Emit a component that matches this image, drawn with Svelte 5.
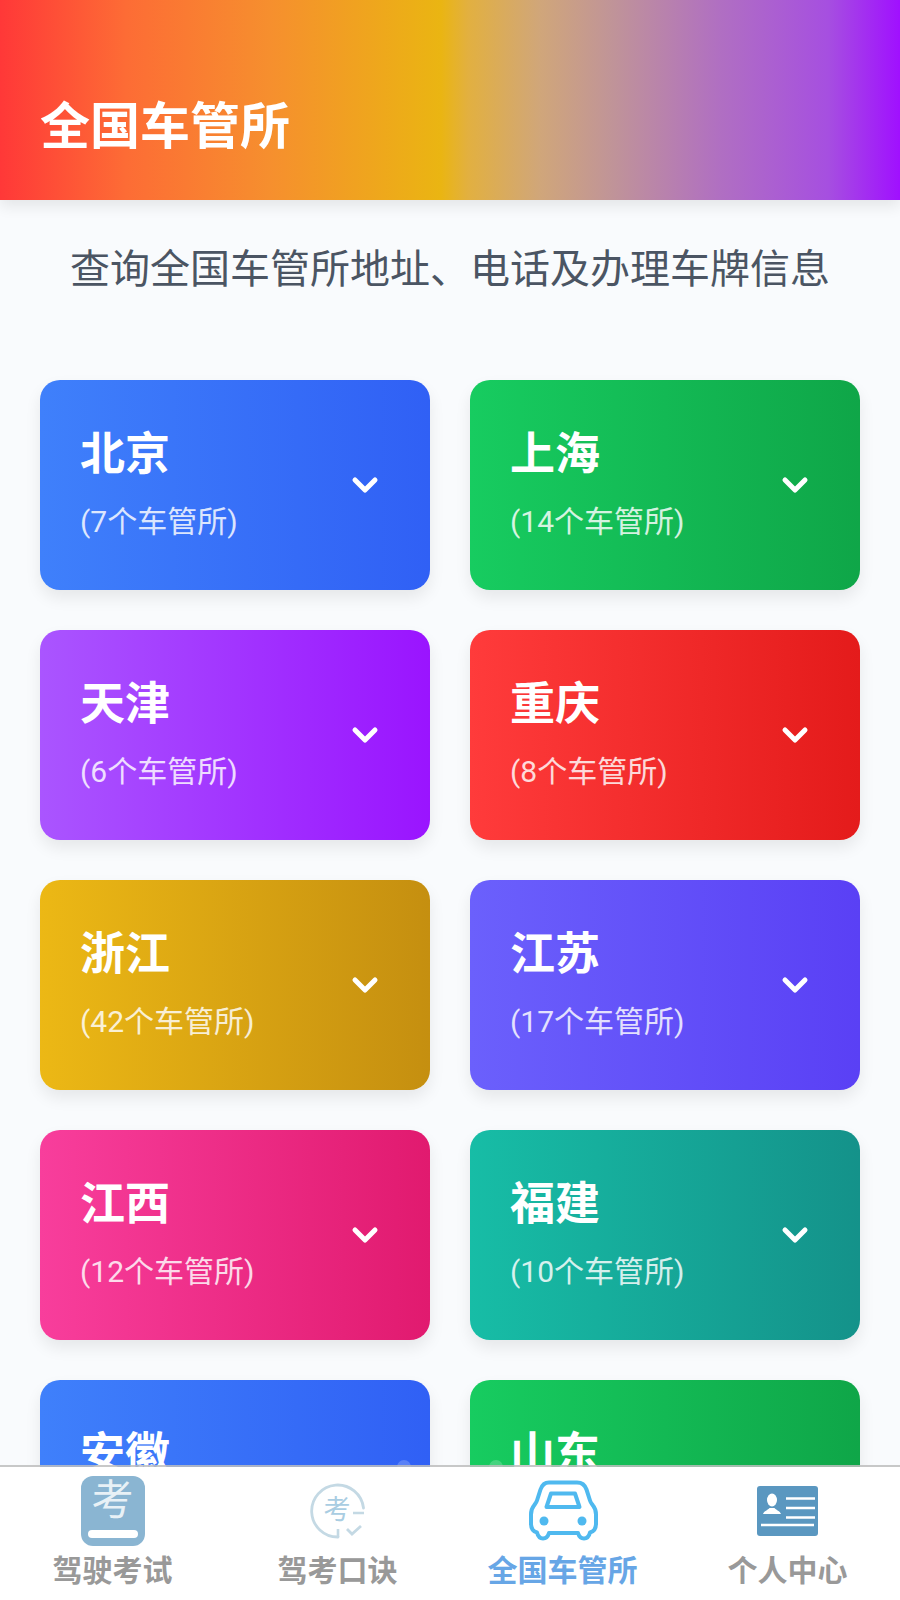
<script>
  const cards = [
    { name: '北京', count: 7, tone: 'blue' },
    { name: '上海', count: 14, tone: 'green' },
    { name: '天津', count: 6, tone: 'purple' },
    { name: '重庆', count: 8, tone: 'red' },
    { name: '浙江', count: 42, tone: 'yellow' },
    { name: '江苏', count: 17, tone: 'indigo' },
    { name: '江西', count: 12, tone: 'pink' },
    { name: '福建', count: 10, tone: 'teal' },
    { name: '安徽', count: 9, tone: 'blue' },
    { name: '山东', count: 16, tone: 'green' }
  ];
</script>

<div class="page">
  <header class="hero"><h1>全国车管所</h1></header>
  <main class="content">
    <p class="intro">查询全国车管所地址、电话及办理车牌信息</p>
    <div class="grid">
      {#each cards as c}
        <button class="card {c.tone}">
          <span class="info">
            <span class="name">{c.name}</span>
            <span class="count">({c.count}个车管所)</span>
          </span>
          <svg class="chev" viewBox="0 0 28 20" width="28" height="20" aria-hidden="true">
            <path d="M4 5l10 10L24 5" fill="none" stroke="#fff" stroke-width="5" stroke-linecap="round" stroke-linejoin="round" />
          </svg>
        </button>
      {/each}
    </div>
  </main>

  <span class="dot dot-a"></span>
  <span class="dot dot-b"></span>

  <nav class="tabs">
    <div class="tab">
      <div class="icon">
        <div class="exam">
          <span class="exam-char">考</span>
          <span class="exam-bar"></span>
        </div>
      </div>
      <span class="label">驾驶考试</span>
    </div>
    <div class="tab">
      <div class="icon">
        <div class="rhyme">
          <svg viewBox="0 0 56 56" width="56" height="56" aria-hidden="true">
            <path d="M53.500 25A26 26 0 1 0 28 54" fill="none" stroke="#c4d9e4" stroke-width="2.800" stroke-linecap="round" />
            <path d="M43 30h11M28 46v8" fill="none" stroke="#c4d9e4" stroke-width="2.600" />
            <path d="M37 46l5 5 9-8" fill="none" stroke="#c4d9e4" stroke-width="2.800" />
          </svg>
          <span class="rhyme-char">考</span>
        </div>
      </div>
      <span class="label">驾考口诀</span>
    </div>
    <div class="tab active">
      <div class="icon">
        <svg viewBox="0 0 70 62" width="70" height="62" aria-hidden="true">
          <path d="M21 2.500h28c5 0 8 2.500 9.500 7l3.500 11c.6 2 1.500 3 3 5 2.500 3 3 5 3 9v9c0 5-2 8-6 9-1 4-3 6-6 6s-5-2-6-5.500H21c-1 3.500-3 5.500-6 5.500s-5-2-6-6c-4-1-6-4-6-9v-9c0-4 .5-6 3-9 1.500-2 2.400-3 3-5l3.500-11c1.500-4.500 4.500-7 8.500-7z" fill="none" stroke="#4fb9ef" stroke-width="4" stroke-linejoin="round" />
          <path d="M23 13.500h24l4.500 13.500h-33z" fill="none" stroke="#4fb9ef" stroke-width="4" stroke-linejoin="round" />
          <circle cx="16" cy="41" r="4.500" fill="#4fb9ef" />
          <circle cx="54" cy="41" r="4.500" fill="#4fb9ef" />
        </svg>
      </div>
      <span class="label">全国车管所</span>
    </div>
    <div class="tab">
      <div class="icon">
        <svg viewBox="0 0 62 50" width="62" height="50" aria-hidden="true">
          <rect width="61" height="50" rx="3" fill="#5a97c0" />
          <ellipse cx="15" cy="14" rx="5" ry="6.500" fill="#fff" />
          <path d="M6 28c1-3 5-4 6.500-6h5c1.500 2 5.500 3 6.500 6z" fill="#fff" />
          <path d="M29 12.500h29M29 22h29M29 31.500h29M4 39h53" stroke="#fff" stroke-width="2.500" />
        </svg>
      </div>
      <span class="label">个人中心</span>
    </div>
  </nav>
</div>

<style>
  :global(body) {
    margin: 0;
    background: #f9fbfd;
    font-family: Roboto, "Noto Sans CJK SC", sans-serif;
  }

  .page {
    position: relative;
    height: 1600px;
    overflow: hidden;
    background: #f9fbfd;
  }

  .hero {
    display: flex;
    align-items: center;
    box-sizing: border-box;
    height: 200px;
    padding: 0 40px;
    background: linear-gradient(90deg, #ff3838 0%, #fd6c35 14%, #f68f2e 30%, #eab512 49%, #e2b040 52%, #d0a67a 60%, #c09498 68%, #b06fc2 80%, #a64fe0 92%, #a010ff 100%);
    box-shadow: 0 6px 14px rgba(0, 0, 0, 0.09);
  }

  .hero h1 {
    margin: 54px 0 0;
    color: #fff;
    font-size: 50px;
    line-height: 1;
    font-weight: 700;
  }

  .content {
    padding: 42px 40px 0;
  }

  .intro {
    margin: 0 0 82px;
    text-align: center;
    color: #4b5563;
    font-size: 40px;
    line-height: 56px;
  }

  .grid {
    display: grid;
    grid-template-columns: 390px 390px;
    gap: 40px;
  }

  .card {
    display: flex;
    align-items: center;
    justify-content: space-between;
    box-sizing: border-box;
    height: 210px;
    padding: 0 51px 0 40px;
    border: 0;
    border-radius: 20px;
    font: inherit;
    color: #fff;
    text-align: left;
    box-shadow: 0 8px 16px rgba(0, 0, 0, 0.08);
  }

  .blue { background: linear-gradient(90deg, #3f80fb, #3060f5); }
  .green { background: linear-gradient(90deg, #17cc60, #0fa648); }
  .purple { background: linear-gradient(90deg, #aa55ff, #9a14ff); }
  .red { background: linear-gradient(90deg, #ff3b3b, #e41b1b); }
  .yellow { background: linear-gradient(90deg, #ecb815, #c58f10); }
  .indigo { background: linear-gradient(90deg, #6b60fc, #5a40f5); }
  .pink { background: linear-gradient(90deg, #f83e9c, #e11a6f); }
  .teal { background: linear-gradient(90deg, #17bda6, #14928a); }

  .info {
    display: flex;
    flex-direction: column;
  }

  .name {
    font-size: 45px;
    line-height: 60px;
    font-weight: 700;
    margin-top: -4px;
  }

  .count {
    margin-top: 17px;
    font-size: 30px;
    line-height: 40px;
    opacity: 0.82;
  }

  .chev {
    flex: none;
  }

  .dot {
    position: absolute;
    top: 1460px;
    width: 14px;
    height: 14px;
    border-radius: 50%;
    background: rgba(255, 255, 255, 0.2);
  }

  .dot-a { left: 397px; }
  .dot-b { left: 489px; }

  .tabs {
    position: absolute;
    left: 0;
    right: 0;
    bottom: 0;
    display: grid;
    grid-template-columns: repeat(4, 1fr);
    height: 133px;
    border-top: 2px solid rgba(190, 190, 190, 0.85);
    background: #fff;
    background-clip: padding-box;
  }

  .tab {
    display: flex;
    flex-direction: column;
    align-items: center;
  }

  .icon {
    display: flex;
    align-items: center;
    justify-content: center;
    height: 80px;
    margin-top: 4px;
  }

  .label {
    margin-top: 2px;
    color: #999;
    font-size: 30px;
    line-height: 36px;
    font-weight: 700;
  }

  .active .label {
    color: #67a6e6;
  }

  .exam {
    position: relative;
    width: 64px;
    height: 70px;
    border-radius: 12px;
    background: #8ab5d2;
    display: flex;
    justify-content: center;
  }

  .exam-char {
    color: #e8f1f6;
    font-size: 42px;
    line-height: 50px;
    font-weight: 400;
  }

  .exam-bar {
    position: absolute;
    left: 7px;
    right: 7px;
    bottom: 8px;
    height: 8px;
    border-radius: 4px;
    background: #fff;
  }

  .rhyme {
    position: relative;
    width: 56px;
    height: 56px;
  }

  .rhyme svg {
    display: block;
  }

  .rhyme-char {
    position: absolute;
    left: 14px;
    top: 12px;
    color: #a9cde2;
    font-size: 27px;
    line-height: 30px;
  }
</style>
